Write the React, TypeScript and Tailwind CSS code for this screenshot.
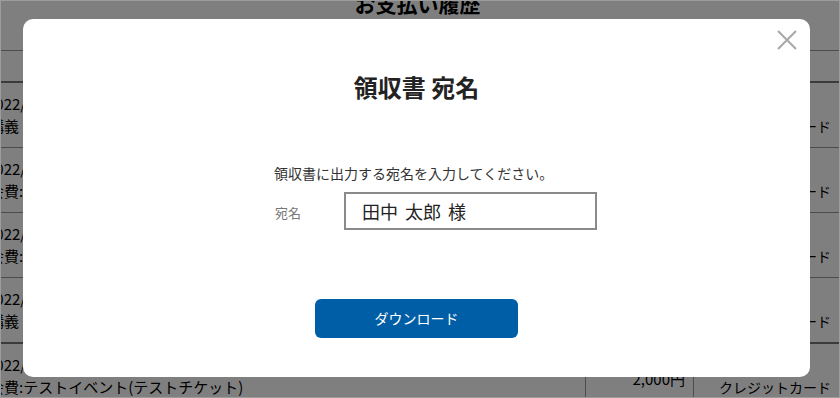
import { useState } from 'react';

type Row = {
  date: string;
  desc: React.ReactNode;
  amount: string;
  method: string;
};

const rows: Row[] = [
  {
    date: '2022/03/14 10:00',
    desc: (
      <>
        講義 <span className="text-[#a06c00]">B</span>コース 受講料
      </>
    ),
    amount: '5,000円',
    method: 'クレジットカード',
  },
  { date: '2022/03/10 18:30', desc: '会費:テストイベント(テストチケット)', amount: '2,000円', method: 'クレジットカード' },
  { date: '2022/03/02 09:15', desc: '会費:テストイベント(テストチケット)', amount: '2,000円', method: 'クレジットカード' },
  {
    date: '2022/02/21 13:00',
    desc: (
      <>
        講義 <span className="text-[#555]">D</span>コース 受講料
      </>
    ),
    amount: '5,000円',
    method: 'クレジットカード',
  },
  { date: '2022/02/14 11:45', desc: '会費:テストイベント(テストチケット)', amount: '2,000円', method: 'クレジットカード' },
];

export default function App() {
  const [name, setName] = useState('田中 太郎 様');

  return (
    <div className="relative h-[398px] w-[840px] overflow-hidden bg-white font-['Noto_Sans_CJK_JP','Noto_Sans',sans-serif] text-black">
      {/* Page behind the dialog */}
      <div className="flex h-[50px] w-[835px] flex-col items-center">
        <h1 className="-mt-[11px] text-[21px] font-bold leading-[28px]">お支払い履歴</h1>
      </div>

      <div className="-ml-[30px] w-[885px] text-[15px] leading-[22px]">
        {/* Header */}
        <div className="grid h-[33px] grid-cols-[615px_108px_162px] border-t border-b-2 border-t-[#999] border-b-[#777]" />

        {rows.map((r, i) => (
          <div
            key={i}
            className={
              'grid grid-cols-[615px_108px_162px] ' +
              (i === 3 ? 'h-[66px] border-b-2 border-[#777]' : 'h-[65px] border-b border-[#999]')
            }
          >
            <div className="pl-[19px] pt-[10px] whitespace-nowrap">
              <div className="-ml-[2px]">{r.date}</div>
              <div>{r.desc}</div>
            </div>
            <div className="border-l border-[#999] pr-[8px] pt-[24px] text-right">{r.amount}</div>
            <div className="border-l border-[#999] pl-[25px] pt-[32px] text-[14px] whitespace-nowrap">
              {r.method}
            </div>
          </div>
        ))}
      </div>

      {/* Overlay + dialog */}
      <div className="absolute inset-0 bg-black/50 pl-[23px] pt-[19px]">
        <div className="relative h-[358px] w-[787px] rounded-[10px] bg-white pt-[52px]">
          <button className="absolute right-[13px] top-[11px] h-[20px] w-[20px] text-[#aaa]">
            <svg viewBox="0 0 20 20" className="h-[20px] w-[20px]" fill="none" stroke="currentColor" strokeWidth="2.2">
              <path d="M1 1L19 19M19 1L1 19" />
            </svg>
          </button>

          <h2 className="text-center text-[24px] font-bold leading-[32px] text-[#222]">領収書 宛名</h2>

          <div className="ml-[251px] mt-[60px]">
            <p className="text-[14px] leading-[20px] text-[#333]">領収書に出力する宛名を入力してください。</p>
            <div className="mt-[9px] flex items-center">
              <label className="w-[70px] pl-[1px] pt-[3px] text-[13px] leading-[18px] text-[#777]">宛名</label>
              <input
                value={name}
                onChange={e => setName(e.target.value)}
                className="h-[38px] w-[253px] border-2 border-[#8a8a8a] px-[16px] text-[18px] text-[#222] outline-none [word-spacing:3px]"
              />
            </div>
          </div>

          <button className="mx-auto mt-[69px] flex h-[39px] w-[203px] items-center justify-center rounded-[6px] bg-[#005ea6] text-[14px] text-white">
            ダウンロード
          </button>
        </div>
      </div>

      <div className="pointer-events-none absolute inset-0 border border-[#9c9c9c]" />
    </div>
  );
}
